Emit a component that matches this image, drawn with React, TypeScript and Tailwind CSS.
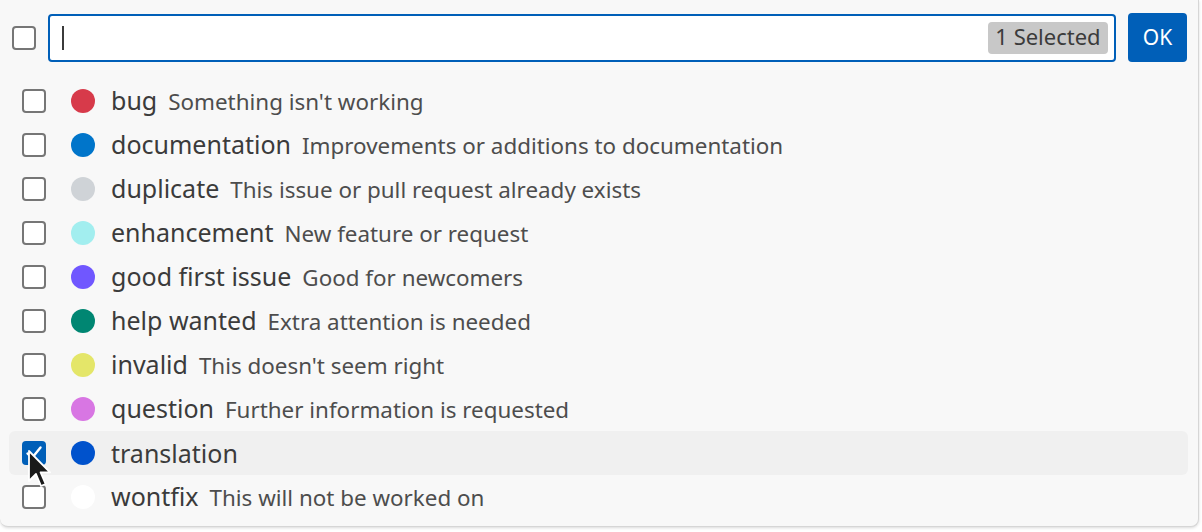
import React from "react";

const items = [
  { label: "bug", desc: "Something isn't working", color: "#d73a4a" },
  { label: "documentation", desc: "Improvements or additions to documentation", color: "#0075ca" },
  { label: "duplicate", desc: "This issue or pull request already exists", color: "#cfd3d7" },
  { label: "enhancement", desc: "New feature or request", color: "#a2eeef" },
  { label: "good first issue", desc: "Good for newcomers", color: "#7057ff" },
  { label: "help wanted", desc: "Extra attention is needed", color: "#008672" },
  { label: "invalid", desc: "This doesn't seem right", color: "#e4e669" },
  { label: "question", desc: "Further information is requested", color: "#d876e3" },
  { label: "translation", desc: "", color: "#0052cc", checked: true },
  { label: "wontfix", desc: "This will not be worked on", color: "#ffffff" },
];

function Box({ checked }: { checked?: boolean }) {
  if (checked) {
    return (
      <div className="w-[24px] h-[24px] rounded-[4px] bg-[#005fb8] flex items-center justify-center shrink-0">
        <svg width="20" height="20" viewBox="0 0 20 20">
          <path d="M3.5 10.5 L8 15 L16.5 4.5" fill="none" stroke="#fff" strokeWidth="2.4" strokeLinecap="round" strokeLinejoin="round" />
        </svg>
      </div>
    );
  }
  return <div className="w-[24px] h-[24px] rounded-[4px] border-2 border-[#767676] bg-white shrink-0" />;
}

export default function App() {
  return (
    <div className="w-[1202px] h-[532px] bg-white relative overflow-hidden" style={{ fontFamily: '"Noto Sans", "Open Sans", sans-serif' }}>
      <div className="w-[1199px] h-[527px] bg-[#f8f8f8] border-r border-b border-[#d6d6d6] rounded-br-[8px] rounded-bl-[8px] shadow-[0_1px_3px_rgba(0,0,0,0.15)] flex flex-col">
        <div className="flex items-center pl-[12px] pr-[11px] pt-[13px]">
          <Box />
          <div className="ml-[12px] flex-1 h-[48px] border-2 border-[#005fb8] rounded-[4px] bg-white flex items-center pl-[12px] pr-[6px]">
            <div className="w-[2px] h-[24px] bg-[#3b3b3b]" />
            <div className="flex-1" />
            <div className="h-[32px] w-[120px] rounded-[4px] bg-[#c8c8c8] text-[#3b3b3b] text-[22px] flex items-center justify-center leading-none pb-[3px]">1 Selected</div>
          </div>
          <div className="ml-[12px] w-[59px] h-[49px] rounded-[4px] bg-[#005fb8] text-white text-[21px] flex items-center justify-center">OK</div>
        </div>
        <div className="mt-[17px] ml-[9px] mr-[10px] flex flex-col">
          {items.map((it) => (
            <div key={it.label} className={`h-[44px] flex items-center pl-[13px] rounded-[6px] ${it.checked ? "bg-[#f0f0f0]" : ""}`}>
              <Box checked={it.checked} />
              <div className="ml-[25px] w-[24px] h-[24px] rounded-full shrink-0" style={{ backgroundColor: it.color }} />
              <div className="ml-[16px] flex items-baseline gap-[11px] whitespace-nowrap leading-none">
                <span className="text-[25px] text-[#3b3b3b]">{it.label}</span>
                {it.desc && <span className="text-[22.4px] text-[#4d4d4d]">{it.desc}</span>}
              </div>
            </div>
          ))}
        </div>
      </div>
      <svg className="absolute left-[28px] top-[450px]" width="24" height="38" viewBox="0 0 12 19">
        <path d="M0.5 0.5 L0.5 15.5 L4 12 L6.5 18 L8.8 17 L6.3 11.2 L11 11.2 Z" fill="#1a1a1a" stroke="#fff" strokeWidth="0.9" strokeLinejoin="round" />
      </svg>
    </div>
  );
}
